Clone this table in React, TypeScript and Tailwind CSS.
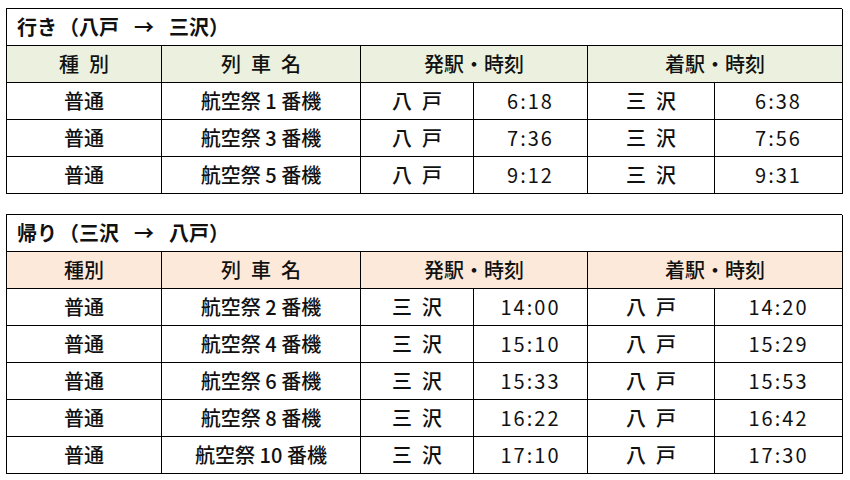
import React from 'react';

/* ------------------------------------------------------------------ */
/*  Timetable data                                                     */
/* ------------------------------------------------------------------ */

type Row = { kind: string; name: string; dep: string; depTime: string; arr: string; arrTime: string };

const OUTBOUND: Row[] = [
  { kind: '普通', name: '航空祭 1 番機', dep: '八\u2002戸', depTime: '6:18', arr: '三\u2002沢', arrTime: '6:38' },
  { kind: '普通', name: '航空祭 3 番機', dep: '八\u2002戸', depTime: '7:36', arr: '三\u2002沢', arrTime: '7:56' },
  { kind: '普通', name: '航空祭 5 番機', dep: '八\u2002戸', depTime: '9:12', arr: '三\u2002沢', arrTime: '9:31' },
];

const INBOUND: Row[] = [
  { kind: '普通', name: '航空祭 2 番機', dep: '三\u2002沢', depTime: '14:00', arr: '八\u2002戸', arrTime: '14:20' },
  { kind: '普通', name: '航空祭 4 番機', dep: '三\u2002沢', depTime: '15:10', arr: '八\u2002戸', arrTime: '15:29' },
  { kind: '普通', name: '航空祭 6 番機', dep: '三\u2002沢', depTime: '15:33', arr: '八\u2002戸', arrTime: '15:53' },
  { kind: '普通', name: '航空祭 8 番機', dep: '三\u2002沢', depTime: '16:22', arr: '八\u2002戸', arrTime: '16:42' },
  { kind: '普通', name: '航空祭 10 番機', dep: '三\u2002沢', depTime: '17:10', arr: '八\u2002戸', arrTime: '17:30' },
];

const cell = 'h-[37px] border-r border-b border-black flex items-center justify-center';

function Title({ from, to, lead }: { from: string; to: string; lead: string }) {
  return (
    <div className="col-span-6 h-[37px] border-r border-b border-black flex items-center pl-[10px] text-[20px] font-bold">
      <span>{lead}</span>
      <span className="inline-block w-[22px] text-right">（</span>
      <span>{from}</span>
      <span className="inline-block w-[15px]" />
      <span className="inline-block w-[20px] text-center">→</span>
      <span className="inline-block w-[15px]" />
      <span>{to}</span>
      <span className="inline-block w-[20px] text-left">）</span>
    </div>
  );
}

function Timetable({ lead, from, to, kindLabel, headerBg, rows }: { lead: string; from: string; to: string; kindLabel: string; headerBg: string; rows: Row[] }) {
  return (
    <div className="grid w-[836px] grid-cols-[155px_199px_113px_114px_127px_128px] border-l border-t border-black">
      <Title lead={lead} from={from} to={to} />

      <div className={`${cell} ${headerBg}`}>{kindLabel}</div>
      <div className={`${cell} ${headerBg}`}>列{'\u2002'}車{'\u2002'}名</div>
      <div className={`${cell} ${headerBg} col-span-2`}>発駅・時刻</div>
      <div className={`${cell} ${headerBg} col-span-2`}>着駅・時刻</div>

      {rows.map((r) => (
        <React.Fragment key={r.name}>
          <div className={cell}>{r.kind}</div>
          <div className={cell}>{r.name}</div>
          <div className={cell}>{r.dep}</div>
          <div className={`${cell} font-normal tracking-[2px]`}>{r.depTime}</div>
          <div className={cell}>{r.arr}</div>
          <div className={`${cell} font-normal tracking-[2px]`}>{r.arrTime}</div>
        </React.Fragment>
      ))}
    </div>
  );
}

export default function App() {
  return (
    <div className="w-[850px] h-[480px] bg-white pl-[6px] pt-[8px] flex flex-col gap-[20px] text-[20px] text-[#111] font-medium font-['Noto_Sans_CJK_JP',sans-serif] leading-none">
      <Timetable lead="行き" from="八戸" to="三沢" kindLabel={'種\u2002別'} headerBg="bg-[#ebf1de]" rows={OUTBOUND} />
      <Timetable lead="帰り" from="三沢" to="八戸" kindLabel="種別" headerBg="bg-[#fde9d9]" rows={INBOUND} />
    </div>
  );
}
